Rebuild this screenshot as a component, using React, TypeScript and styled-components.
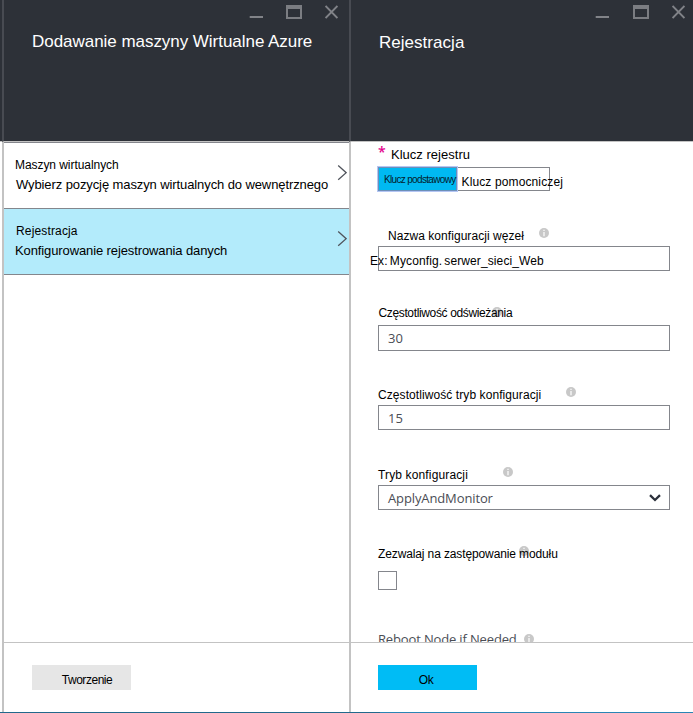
import React from 'react';
import styled, { createGlobalStyle } from 'styled-components';

const GlobalStyle = createGlobalStyle`
  *, *::before, *::after { box-sizing: border-box; }
  body {
    margin: 0;
    background: #fff;
    color: #000;
    font-family: "Liberation Sans", Arial, sans-serif;
    font-size: 12px;
    line-height: 16px;
  }
  button { font: inherit; color: inherit; }
`;

const Window = styled.div`
  display: grid;
  grid-template-columns: 2px 347px 344px;
  width: 693px;
  height: 713px;
  overflow: hidden;
`;

const Gutter = styled.div`
  display: grid;
  grid-template-rows: 141px 1px 1fr 1px;
`;

const GutterTop = styled.div`
  background: #2d3138;
`;

const GutterLine = styled.div`
  grid-row: 2;
  background: #c3c3c3;
`;

const GutterBase = styled.div`
  grid-row: 4;
  background: #22698c;
`;

const Blade = styled.section`
  display: grid;
  grid-template-columns: 100%;
  grid-template-rows: 142px 500px 70px 1px;
  min-width: 0;
`;

const Header = styled.header<{ $right: number }>`
  background: #2d3138;
  border-left: 2px solid #484b52;
  border-bottom: 1px solid #c3c3c3;
  padding: 5px ${p => p.$right}px 0 0;
`;

const Controls = styled.div<{ $gap: number }>`
  display: flex;
  justify-content: flex-end;
  gap: ${p => p.$gap}px;
  height: 14px;
`;

const Title = styled.h1<{ $top: number; $spacing: number }>`
  margin: ${p => p.$top}px 0 0 28px;
  font-size: 17px;
  line-height: 20px;
  font-weight: 400;
  letter-spacing: ${p => p.$spacing}px;
  color: #fff;
  white-space: nowrap;
`;

const Body = styled.div`
  border-left: 2px solid #c3c3c3;
  overflow: hidden;
`;

const FormBody = styled(Body)`
  padding-left: 27px;
`;

const StepList = styled.nav`
  display: flex;
  flex-direction: column;
  border-top: 1px solid #84868c;
`;

const Step = styled.div<{ $selected?: boolean }>`
  display: flex;
  justify-content: space-between;
  height: 66px;
  padding: 14px 2px 0 11px;
  border-bottom: 1px solid #84868c;
  background: ${p => (p.$selected ? '#b3ebfb' : '#fff')};
`;

const StepText = styled.div`
  display: flex;
  flex-direction: column;
  gap: 4px;
`;

const StepName = styled.span<{ $spacing: number; $indent?: number }>`
  margin-left: ${p => p.$indent ?? 0}px;
  letter-spacing: ${p => p.$spacing}px;
  white-space: nowrap;
`;

const StepDetail = styled(StepName)`
  font-size: 13px;
`;

const StepArrow = styled.svg`
  flex: none;
  margin-top: 8px;
`;

const Field = styled.div<{ $gap: number }>`
  margin-top: ${p => p.$gap}px;
`;

const LabelRow = styled.div<{ $height?: number }>`
  display: flex;
  align-items: flex-start;
  height: ${p => p.$height ?? 20}px;
`;

const Label = styled.label<{ $spacing: number; $top?: number; $left?: number }>`
  position: relative;
  z-index: 1;
  margin: ${p => p.$top ?? 2}px 0 0 ${p => p.$left ?? 0}px;
  letter-spacing: ${p => p.$spacing}px;
  white-space: nowrap;
`;

const RequiredLabel = styled(Label)`
  font-size: 13px;
`;

const OriginalLabel = styled(Label)`
  font-family: "Open Sans", sans-serif;
  font-size: 13px;
  color: #4a4d55;
`;

const Star = styled.span`
  font-family: "Open Sans", sans-serif;
  width: 13px;
  font-size: 14px;
  font-weight: 600;
  line-height: 20px;
  color: #e3008c;
`;

const InfoMark = styled.svg<{ $gap: number }>`
  flex: none;
  margin: 2px 0 0 ${p => p.$gap}px;
`;

const Segments = styled.div`
  display: flex;
  width: 172px;
  height: 24px;
  border: 1px solid #84868c;
`;

const ActiveSegment = styled.div`
  width: 79px;
  margin: -1px 0 -1px -1px;
  padding: 5px 0 0 5px;
  border: 1px solid #6d8fb8;
  background: #00b9f2;
  box-shadow: 0 0 0 1px #b4c6f4;
  color: #04202c;
  font-size: 10px;
  line-height: 14px;
  letter-spacing: -0.67px;
  white-space: nowrap;
`;

const Segment = styled.div`
  padding: 6px 0 0 5px;
  letter-spacing: 0.12px;
  white-space: nowrap;
`;

const Box = styled.div<{ $height?: number }>`
  display: flex;
  align-items: center;
  justify-content: space-between;
  width: 292px;
  height: ${p => p.$height ?? 25}px;
  padding: 0 8px 0 9px;
  border: 1px solid #84868c;
  background: #fff;
`;

const Value = styled.span<{ $spacing?: number }>`
  font-family: "Open Sans", sans-serif;
  font-size: 13px;
  letter-spacing: ${p => p.$spacing ?? 0}px;
  color: #4a4d55;
`;

const Hint = styled.span`
  margin: 4px 0 0 -18px;
  letter-spacing: 0.1px;
  word-spacing: -1.2px;
  white-space: nowrap;
`;

const Checkbox = styled.div`
  width: 19px;
  height: 19px;
  border: 1px solid #84868c;
`;

const Footer = styled.footer`
  border-left: 2px solid #c3c3c3;
  border-top: 1px solid #c3c3c3;
  padding: 22px 0 0 27px;
`;

const StepsFooter = styled(Footer)`
  padding-left: 28px;
`;

const Button = styled.button<{ $primary?: boolean }>`
  display: block;
  width: 99px;
  height: 25px;
  padding: ${p => (p.$primary ? '5px 3px 0 0' : '5px 0 0 11px')};
  border: 0;
  background: ${p => (p.$primary ? '#00bcf5' : '#e6e6e6')};
  line-height: 16px;
  letter-spacing: ${p => (p.$primary ? '-0.4px' : '-0.46px')};
`;

const BaseLine = styled.div<{ $from: string; $to: string; $stop: number }>`
  background: linear-gradient(to right, ${p => p.$from} ${p => p.$stop}px, ${p => p.$to} ${p => p.$stop}px);
`;

function WindowControls({ gap }: { gap: number }) {
  return (
    <Controls $gap={gap}>
      <svg width="14" height="14" viewBox="0 0 14 14"><path d="M0.7 12H14" stroke="#818388" strokeWidth="2" /></svg>
      <svg width="16" height="14" viewBox="0 0 16 14">
        <path d="M0 0H16V14H0ZM2 4V12H14V4Z" fill="#7b7d82" fillRule="evenodd" />
      </svg>
      <svg width="13" height="14" viewBox="0 0 13 14"><path d="M0.6 1L12.4 13M12.4 1L0.6 13" stroke="#818388" strokeWidth="1.8" /></svg>
    </Controls>
  );
}

function Arrow() {
  return (
    <StepArrow width="10" height="16" viewBox="0 0 10 16">
      <path d="M1.2 0.6L9.2 7.7L1.2 14.8" fill="none" stroke="#50545c" strokeWidth="1.3" />
    </StepArrow>
  );
}

function Info({ gap }: { gap: number }) {
  return (
    <InfoMark $gap={gap} width="10" height="10" viewBox="0 0 10 10">
      <circle cx="5" cy="5" r="5" fill="#c8c8c8" />
      <path d="M5 1.7V3.1M5 4.1V8.3" stroke="#f4f4f4" strokeWidth="1.5" />
    </InfoMark>
  );
}

export default function App() {
  return (
    <>
      <GlobalStyle />
      <Window>
        <Gutter>
          <GutterTop />
          <GutterLine />
          <GutterBase />
        </Gutter>

        <Blade>
          <Header $right={11}>
            <WindowControls gap={23} />
            <Title $top={13} $spacing={-0.04}>Dodawanie maszyny Wirtualne Azure</Title>
          </Header>
          <Body>
            <StepList>
              <Step>
                <StepText>
                  <StepName $spacing={-0.06}>Maszyn wirtualnych</StepName>
                  <StepDetail $spacing={-0.1} $indent={1}>Wybierz pozycję maszyn wirtualnych do wewnętrznego</StepDetail>
                </StepText>
                <Arrow />
              </Step>
              <Step $selected>
                <StepText>
                  <StepName $spacing={0.15} $indent={1}>Rejestracja</StepName>
                  <StepDetail $spacing={-0.11}>Konfigurowanie rejestrowania danych</StepDetail>
                </StepText>
                <Arrow />
              </Step>
            </StepList>
          </Body>
          <StepsFooter>
            <Button>Tworzenie</Button>
          </StepsFooter>
          <BaseLine $from="#22698c" $to="#22698c" $stop={100} />
        </Blade>

        <Blade>
          <Header $right={8}>
            <WindowControls gap={23.5} />
            <Title $top={14} $spacing={0.03}>Rejestracja</Title>
          </Header>
          <FormBody>
            <Field $gap={0}>
              <LabelRow $height={25}>
                <Star>*</Star>
                <RequiredLabel $spacing={0.02} $top={5}>Klucz rejestru</RequiredLabel>
              </LabelRow>
              <Segments>
                <ActiveSegment>Klucz podstawowy</ActiveSegment>
                <Segment>Klucz pomocniczej</Segment>
              </Segments>
            </Field>

            <Field $gap={35}>
              <LabelRow>
                <Label $spacing={0.05} $left={10}>Nazwa konfiguracji węzeł</Label>
                <Info gap={15} />
              </LabelRow>
              <Box><Hint>Ex: Myconfig. serwer_sieci_Web</Hint></Box>
            </Field>

            <Field $gap={34}>
              <LabelRow>
                <Label $spacing={-0.36} $top={0} $left={0.5}>Częstotliwość odświeżania</Label>
                <Info gap={-20} />
              </LabelRow>
              <Box $height={26}><Value>30</Value></Box>
            </Field>

            <Field $gap={34}>
              <LabelRow>
                <Label $spacing={0.08}>Częstotliwość tryb konfiguracji</Label>
                <Info gap={25} />
              </LabelRow>
              <Box><Value>15</Value></Box>
            </Field>

            <Field $gap={35}>
              <LabelRow>
                <Label $spacing={0.14}>Tryb konfiguracji</Label>
                <Info gap={35} />
              </LabelRow>
              <Box>
                <Value $spacing={-0.12}>ApplyAndMonitor</Value>
                <svg width="12" height="8" viewBox="0 0 12 8">
                  <path d="M1 1.2L6 6L11 1.2" fill="none" stroke="#2b303b" strokeWidth="2.3" />
                </svg>
              </Box>
            </Field>

            <Field $gap={34}>
              <LabelRow $height={27}>
                <Label $spacing={-0.12}>Zezwalaj na zastępowanie modułu</Label>
                <Info gap={-39} />
              </LabelRow>
              <Checkbox />
            </Field>

            <Field $gap={42}>
              <LabelRow>
                <OriginalLabel $spacing={-0.15} $top={-1}>Reboot Node if Needed</OriginalLabel>
                <Info gap={7} />
              </LabelRow>
            </Field>
          </FormBody>
          <Footer>
            <Button $primary>Ok</Button>
          </Footer>
          <BaseLine $from="#22698c" $to="#2a85b5" $stop={31} />
        </Blade>
      </Window>
    </>
  );
}
